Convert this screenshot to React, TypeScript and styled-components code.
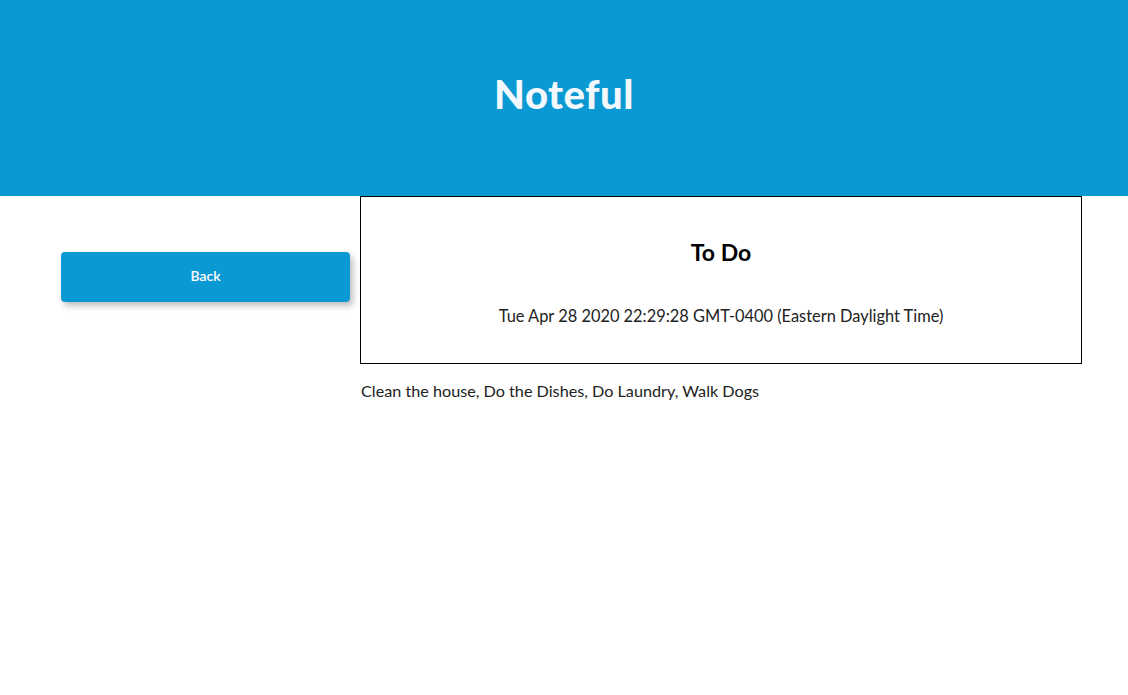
import React from "react";
import styled, { createGlobalStyle } from "styled-components";

const COLORS = {
  blue: "#0a99d3",
  title: "#f2f8fc",
  text: "#222222",
  black: "#000000",
};

const GlobalStyle = createGlobalStyle`
  body {
    margin: 0;
    font-family: "Lato", "Open Sans", sans-serif;
    background: #ffffff;
    color: ${COLORS.text};
  }
`;

const StyledHeader = styled.header`
  background-color: ${COLORS.blue};
  height: 196px;
  display: flex;
  align-items: center;
  justify-content: center;
`;
const StyledTitle = styled.h1`
  margin: 0 0 9px 0;
  color: ${COLORS.title};
  font-family: "Lato", sans-serif;
  font-weight: 900;
  font-size: 40px;
  letter-spacing: 0.5px;
`;
const StyledMain = styled.div`
  display: flex;
  align-items: flex-start;
`;
const StyledSidebar = styled.nav`
  width: 289px;
  flex-shrink: 0;
  padding: 56px 10px 0 61px;
`;
const StyledBackButton = styled.button`
  width: 100%;
  height: 50px;
  padding: 0 0 3px 0;
  border: none;
  border-radius: 4px;
  background-color: ${COLORS.blue};
  color: #ffffff;
  font-family: "Lato", sans-serif;
  font-size: 14px;
  font-weight: 600;
  box-shadow: 3px 4px 6px rgba(0, 0, 0, 0.25);
  cursor: pointer;
`;
const StyledNoteSection = styled.section`
  width: 722px;
`;
const StyledNoteCard = styled.div`
  box-sizing: border-box;
  height: 168px;
  border: 1px solid ${COLORS.black};
  display: flex;
  flex-direction: column;
  align-items: center;
  padding-top: 41px;
`;
const StyledNoteName = styled.h2`
  margin: 0;
  color: ${COLORS.black};
  font-size: 23px;
  font-weight: 700;
`;
const StyledModified = styled.p`
  margin: 40px 0 0 0;
  font-size: 16.4px;
`;
const StyledContent = styled.p`
  margin: 17px 0 0 1px;
  font-size: 16.2px;
`;

const App = () => {
  return (
    <>
      <GlobalStyle />
      <StyledHeader>
        <StyledTitle>Noteful</StyledTitle>
      </StyledHeader>
      <StyledMain>
        <StyledSidebar>
          <StyledBackButton>Back</StyledBackButton>
        </StyledSidebar>
        <StyledNoteSection>
          <StyledNoteCard>
            <StyledNoteName>To Do</StyledNoteName>
            <StyledModified>
              Tue Apr 28 2020 22:29:28 GMT-0400 (Eastern Daylight Time)
            </StyledModified>
          </StyledNoteCard>
          <StyledContent>
            Clean the house, Do the Dishes, Do Laundry, Walk Dogs
          </StyledContent>
        </StyledNoteSection>
      </StyledMain>
    </>
  );
};

export default App;
